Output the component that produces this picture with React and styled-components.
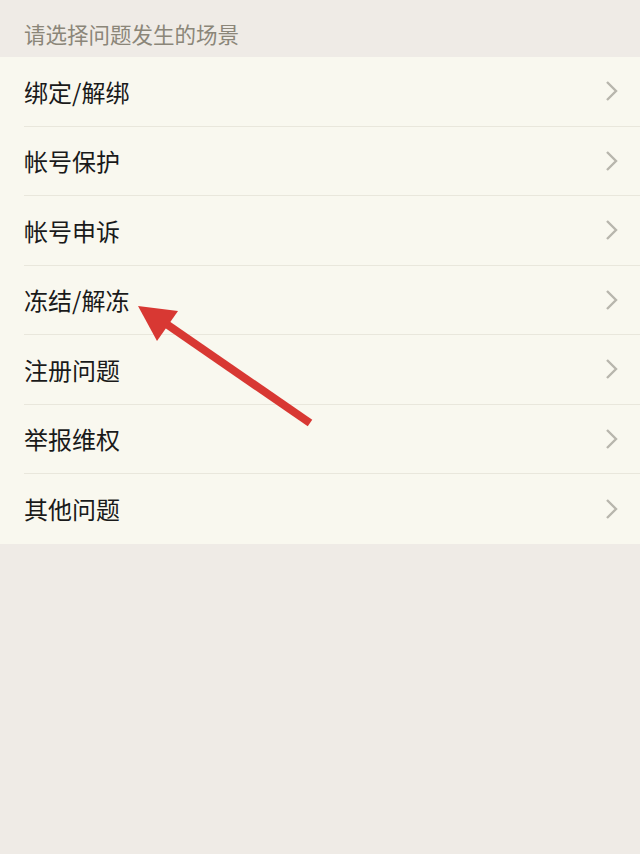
import React from "react";
import styled, { createGlobalStyle } from "styled-components";

const Global = createGlobalStyle`
  html, body {
    margin: 0;
    padding: 0;
    background: #efebe6;
    font-family: "Noto Sans CJK SC", "Noto Sans", sans-serif;
  }
`;

const Page = styled.div`
  position: relative;
  width: 640px;
  min-height: 854px;
  background: #efebe6;
`;

const Header = styled.div`
  height: 57px;
  padding: 10px 24px 0;
  display: flex;
  align-items: center;
  font-size: 21.5px;
  color: #8b8679;
  box-sizing: border-box;
`;

const List = styled.ul`
  list-style: none;
  margin: 0;
  padding: 0;
  background: #f9f8ef;
`;

const Row = styled.li`
  height: 69.5px;
  display: flex;
  align-items: center;
  justify-content: space-between;
  margin-left: 24px;
  padding-right: 22px;
  box-sizing: border-box;
  border-bottom: ${(p) => (p.last ? "none" : "1px solid #e9e7dc")};
  font-size: 24px;
  color: #1a1a1a;
`;

const Chevron = styled.svg`
  width: 13px;
  height: 22px;
`;

const Arrow = styled.svg`
  position: absolute;
  left: 0;
  top: 0;
  pointer-events: none;
`;

const items = ["绑定/解绑", "帐号保护", "帐号申诉", "冻结/解冻", "注册问题", "举报维权", "其他问题"];

export default function App() {
  return (
    <Page>
      <Global />
      <Header>请选择问题发生的场景</Header>
      <List>
        {items.map((t, i) => (
          <Row key={t} last={i === items.length - 1}>
            <span>{t}</span>
            <Chevron viewBox="0 0 13 22">
              <path d="M2 2 L11 11 L2 20" fill="none" stroke="#b8b6ad" strokeWidth="2.4" />
            </Chevron>
          </Row>
        ))}
      </List>
      <Arrow width="640" height="854">
        <line x1="310" y1="423" x2="162" y2="321" stroke="#d83833" strokeWidth="8" />
        <polygon points="138,306 178,311 157,341" fill="#d83833" />
      </Arrow>
    </Page>
  );
}
